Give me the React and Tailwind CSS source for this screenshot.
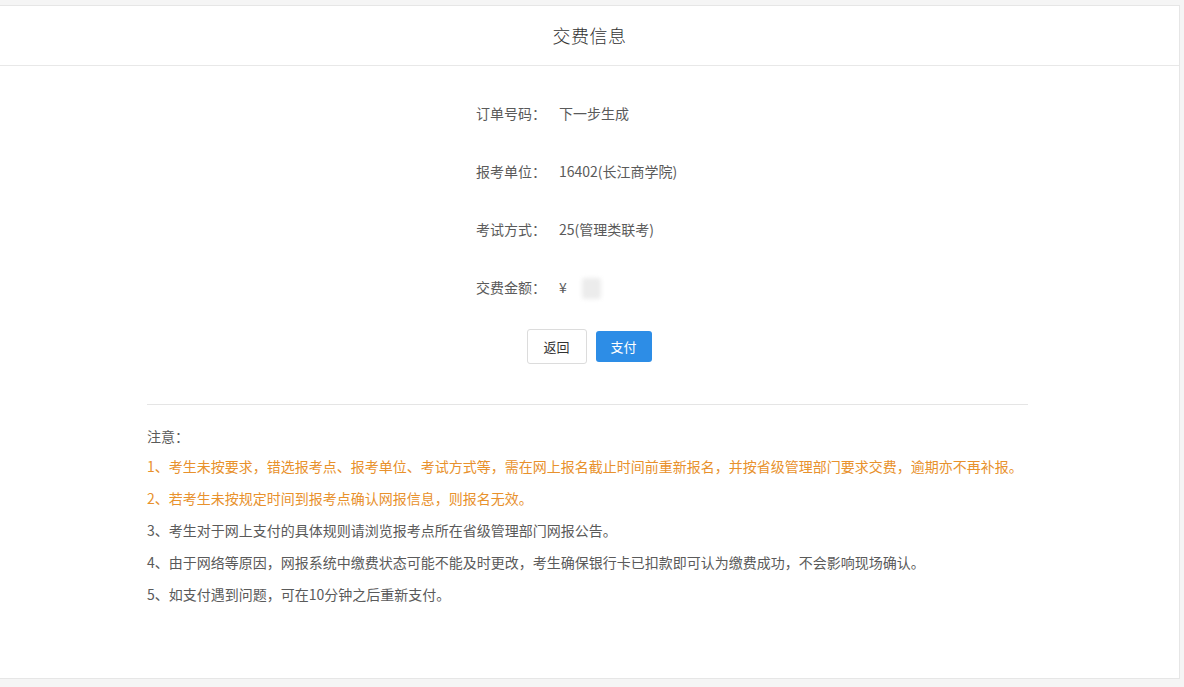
import React from 'react'

const FONT = { fontFamily: '"Microsoft YaHei", "Noto Sans CJK SC", "Liberation Sans", sans-serif' }

const rows = [
  { label: '订单号码：', value: '下一步生成' },
  { label: '报考单位：', value: '16402(长江商学院)' },
  { label: '考试方式：', value: '25(管理类联考)' },
]

const notes = [
  { text: '1、考生未按要求，错选报考点、报考单位、考试方式等，需在网上报名截止时间前重新报名，并按省级管理部门要求交费，逾期亦不再补报。', warn: true },
  { text: '2、若考生未按规定时间到报考点确认网报信息，则报名无效。', warn: true },
  { text: '3、考生对于网上支付的具体规则请浏览报考点所在省级管理部门网报公告。' },
  { text: '4、由于网络等原因，网报系统中缴费状态可能不能及时更改，考生确保银行卡已扣款即可认为缴费成功，不会影响现场确认。' },
  { text: '5、如支付遇到问题，可在10分钟之后重新支付。' },
]

export default function App() {
  return (
    <div className="w-[1184px] h-[687px] bg-[#f5f5f5] pt-[5px] overflow-hidden" style={FONT}>
      <div className="w-[1180px] h-[674px] bg-white border border-l-0 border-[#e6e6e6]">
        <div className="h-[60px] border-b border-[#e8e8e8] flex items-center justify-center">
          <h1 className="text-[18px] font-light text-[#333] tracking-[0.5px]">交费信息</h1>
        </div>

        <div className="w-[226px] ml-[476px] pt-[37px]">
          {rows.map(r => (
            <div key={r.label} className="h-[58px] flex text-[14px] text-[#5a5a5a] whitespace-nowrap">
              <span className="w-[83px]">{r.label}</span>
              <span>{r.value}</span>
            </div>
          ))}
          <div className="h-[40px] flex text-[14px] text-[#5a5a5a] whitespace-nowrap">
            <span className="w-[83px]">交费金额：</span>
            <span className="flex items-start">
              ¥
              <span className="ml-[15px] mt-[1px] w-[19px] h-[21px] rounded-[3px] bg-[#ececec] blur-[2px]"></span>
            </span>
          </div>
        </div>

        <div className="flex justify-center gap-[9px] mt-[12px] ml-[-1px]">
          <button className="w-[60px] h-[35px] border border-[#dcdcdc] rounded-[3px] bg-white text-[13px] text-[#333]">返回</button>
          <button className="w-[56px] h-[31px] mt-[2px] rounded-[3px] bg-[#2d8de6] text-[13px] text-white">支付</button>
        </div>

        <div className="mx-[147px] mt-[40px] border-t border-[#e5e5e5] w-[881px]">
          <div className="pt-[21px] text-[14px] text-[#5a5a5a]">注意：</div>
          <ul className="mt-[9px] text-[14px]">
            {notes.map((n, i) => (
              <li key={i} className={`h-[32px] leading-[20px] whitespace-nowrap ${n.warn ? 'text-[#e8912c]' : 'text-[#5a5a5a]'}`}>
                {n.text}
              </li>
            ))}
          </ul>
        </div>
      </div>
    </div>
  )
}
